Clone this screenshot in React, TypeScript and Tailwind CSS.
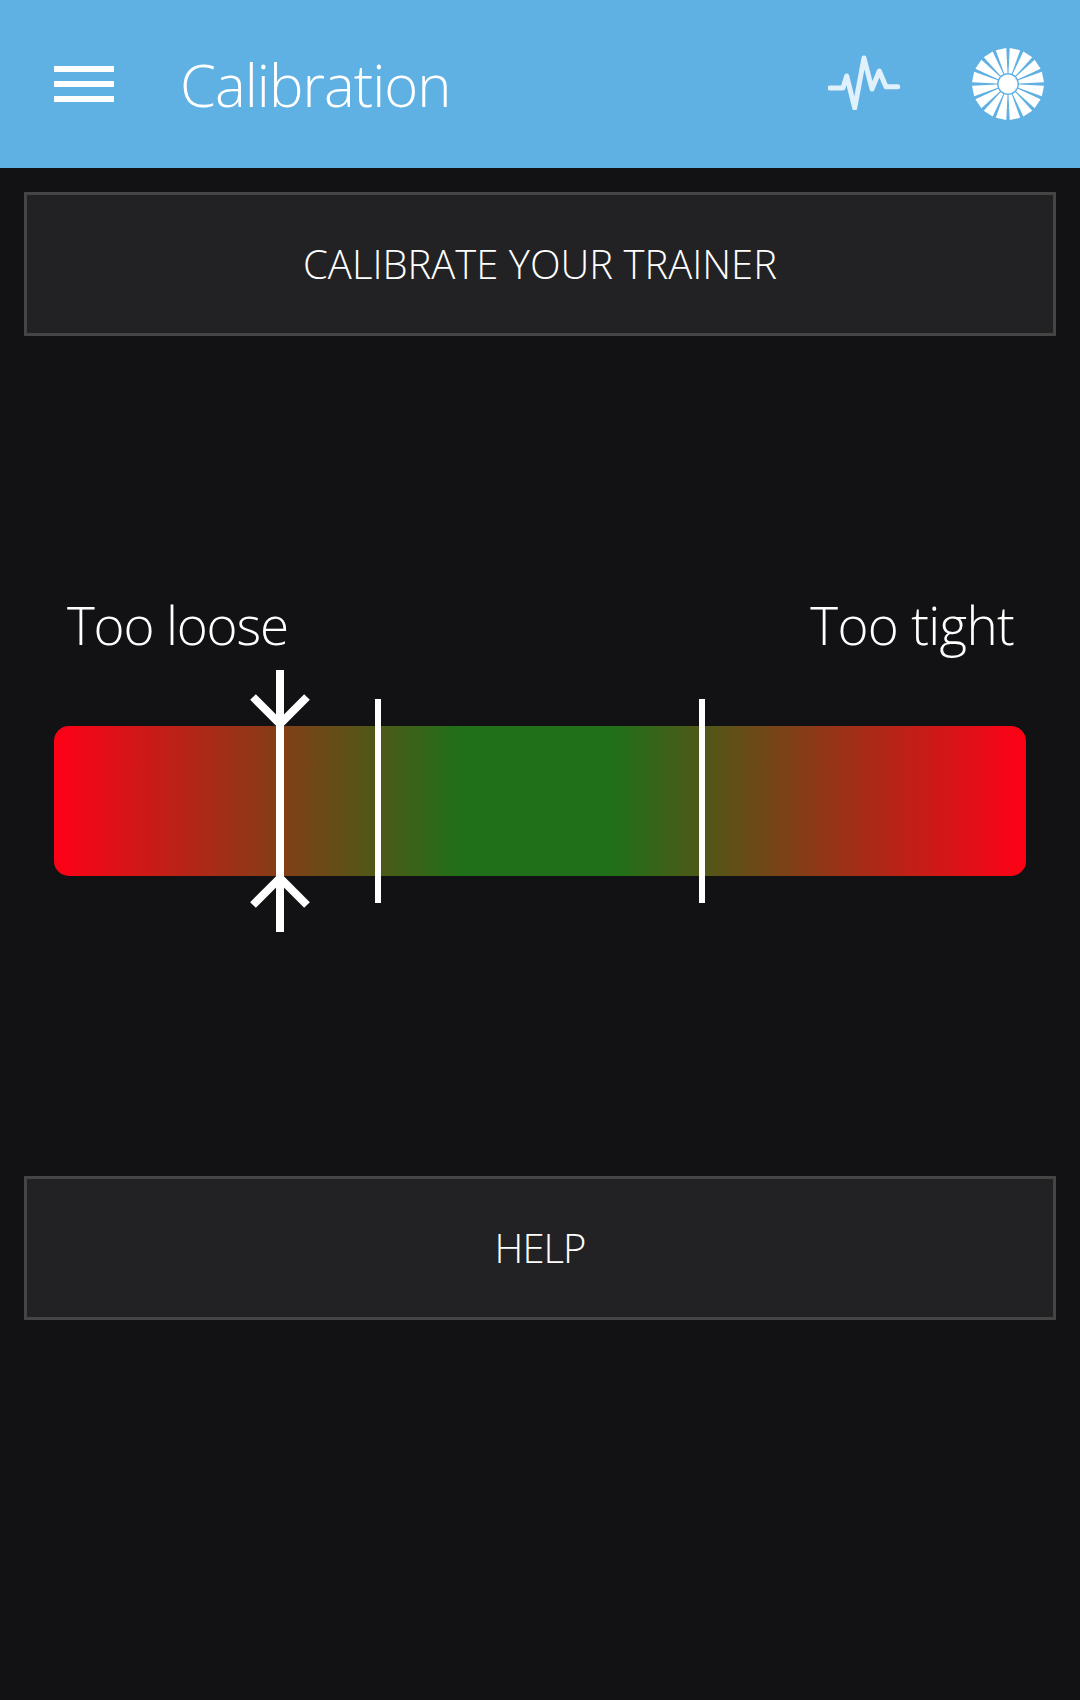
const wedges = Array.from({ length: 16 }, (_, i) => i);

function Sun() {
  const half = (2.7 * Math.PI) / 180;
  const pt = (r: number, a: number) => `${(r * Math.cos(a)).toFixed(2)} ${(r * Math.sin(a)).toFixed(2)}`;
  return (
    <svg width="72" height="72" viewBox="-36 -36 72 72" className="block">
      {wedges.map((i) => {
        const a0 = ((i * 22.5 - 90) * Math.PI) / 180;
        const a1 = (((i + 1) * 22.5 - 90) * Math.PI) / 180;
        const inner = 11;
        const outer = 36;
        return (
          <path
            key={i}
            d={`M${pt(inner, a0 + half)} L${pt(outer, a0 + half)} L${pt(outer, a1 - half)} L${pt(inner, a1 - half)} Z`}
            fill="#fff"
          />
        );
      })}
      <circle r="9.5" fill="#fff" />
    </svg>
  );
}

function Pulse() {
  return (
    <svg width="76" height="60" viewBox="0 0 76 60" className="block">
      <path
        d="M2 38 H15 L18.7 26 L26.7 58 L36 8 L44 39 L51.3 21 L58 36.7 H69.7"
        fill="none"
        stroke="#e1f1fc"
        strokeWidth="5"
        strokeLinecap="round"
        strokeLinejoin="round"
      />
    </svg>
  );
}

function Chevron({ up }: { up?: boolean }) {
  return (
    <svg width="60" height="34" viewBox="0 0 60 34" className="block">
      <path
        d={up ? "M3 31 L30 4 L57 31" : "M3 3 L30 30 L57 3"}
        fill="none"
        stroke="#fff"
        strokeWidth="8"
      />
    </svg>
  );
}

function Btn({ label, tight }: { label: string; tight?: boolean }) {
  return (
    <div
      className={
        tight
          ? "mx-6 h-[144px] border-[3px] border-[#454545] bg-[#222224] flex items-center justify-center text-[40px] font-light text-white tracking-[-1px]"
          : "mx-6 h-[144px] border-[3px] border-[#454545] bg-[#222224] flex items-center justify-center text-[40px] font-light text-white"
      }
    >
      {label}
    </div>
  );
}

export default function App() {
  return (
    <div className="w-[1080px] h-[1700px] bg-[#121214] flex flex-col font-['Open_Sans',sans-serif]">
      <header className="h-[168px] bg-[#60b1e3] flex items-center pl-[54px] pr-[36px] text-white">
        <div className="w-[60px] flex flex-col gap-[9px]">
          <div className="h-[6px] bg-white" />
          <div className="h-[6px] bg-white" />
          <div className="h-[6px] bg-white" />
        </div>
        <h1 className="ml-[66px] text-[58px] font-light tracking-[-1px] flex-1">Calibration</h1>
        <div className="mr-[68px] mb-[8px]"><Pulse /></div>
        <Sun />
      </header>

      <div className="mt-6"><Btn label="CALIBRATE YOUR TRAINER" /></div>

      <div className="mt-[255px] pl-[67px] pr-[66px] flex justify-between text-[53px] leading-[68px] font-light text-white">
        <span className="tracking-[-1.2px]">Too loose</span>
        <span className="tracking-[-0.7px]">Too tight</span>
      </div>

      <div className="relative mx-[54px] mt-[67px] h-[150px] rounded-[15px] bg-[linear-gradient(90deg,#ff0016_0%,#1f7018_42%,#1f7018_57.5%,#ff0016_100%)]">
        <div className="absolute left-[222px] top-[-56px] bottom-[-56px] w-[8px] bg-white" />
        <div className="absolute left-[196px] top-[-32px]"><Chevron /></div>
        <div className="absolute left-[196px] bottom-[-32px]"><Chevron up /></div>
        <div className="absolute left-[321px] top-[-27px] bottom-[-27px] w-[6px] bg-white" />
        <div className="absolute left-[645px] top-[-27px] bottom-[-27px] w-[6px] bg-white" />
      </div>

      <div className="mt-[300px]"><Btn label="HELP" tight /></div>
    </div>
  );
}
